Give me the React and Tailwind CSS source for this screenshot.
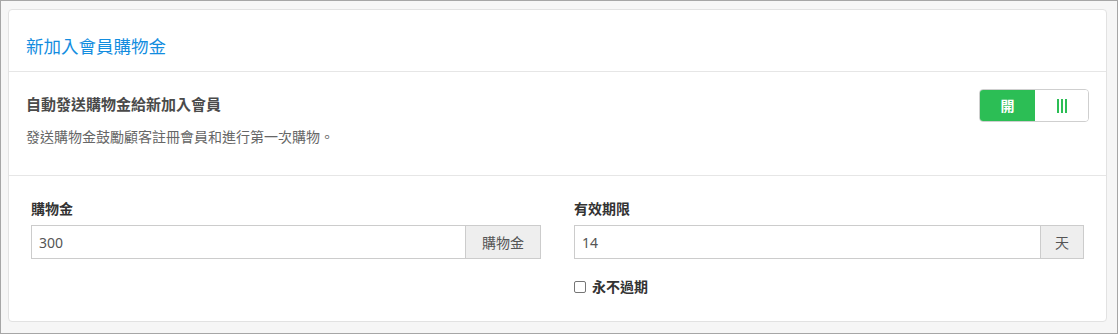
import React from "react";

export default function App() {
  const font = { fontFamily: '"Noto Sans", "Noto Sans CJK TC", sans-serif' };
  return (
    <div
      className="w-[1118px] h-[334px] border border-[#a6a6a6] bg-[#f6f6f6] pl-[7px] pr-[10px] pt-[8px] pb-[11px] box-border"
      style={font}
    >
      <div className="h-full bg-white border border-[#e2e2e2] rounded-[4px] flex flex-col">
        <div className="h-[62px] px-[17px] pt-[24px] border-b border-[#e6e6e6]">
          <h2 className="text-[17.5px] leading-[24px] text-[#138ddf] font-normal">新加入會員購物金</h2>
        </div>
        <div className="h-[104px] px-[17px] pt-[19px] border-b border-[#e6e6e6] flex justify-between">
          <div>
            <div className="text-[15px] leading-[26px] font-bold text-[#4a4a4a]">自動發送購物金給新加入會員</div>
            <div className="mt-[9px] text-[14px] leading-[22px] text-[#666]">發送購物金鼓勵顧客註冊會員和進行第一次購物。</div>
          </div>
          <div className="-mt-[2px] w-[110px] h-[33px] border border-[#cfcfcf] rounded-[4px] flex overflow-hidden">
            <div className="w-[55px] bg-[#2cbe55] flex items-center justify-center text-white text-[14px] font-bold">開</div>
            <div className="flex-1 bg-white flex items-center justify-center gap-[2px]">
              <span className="block w-[2px] h-[14px] bg-[#2cbe55]"></span>
              <span className="block w-[2px] h-[14px] bg-[#2cbe55]"></span>
              <span className="block w-[2px] h-[14px] bg-[#2cbe55]"></span>
            </div>
          </div>
        </div>
        <div className="flex-1 px-[22px] pt-[22px] grid grid-cols-2 gap-x-[33px] content-start">
          <div>
            <div className="text-[14px] leading-[22px] font-bold text-[#333]">購物金</div>
            <div className="mt-[5px] flex h-[34px] border border-[#cccccc]">
              <div className="flex-1 flex items-center px-[7px] text-[14px] text-[#555]">300</div>
              <div className="w-[75px] bg-[#eeeeee] border-l border-[#cccccc] flex items-center justify-center text-[14px] text-[#555]">購物金</div>
            </div>
          </div>
          <div>
            <div className="text-[14px] leading-[22px] font-bold text-[#333]">有效期限</div>
            <div className="mt-[5px] flex h-[34px] border border-[#cccccc]">
              <div className="flex-1 flex items-center px-[7px] text-[14px] text-[#555]">14</div>
              <div className="w-[43px] bg-[#eeeeee] border-l border-[#cccccc] flex items-center justify-center text-[14px] text-[#555]">天</div>
            </div>
            <label className="mt-[18px] flex items-center gap-[6px]">
              <span className="block w-[12px] h-[12px] border border-[#767676] rounded-[2px] bg-white"></span>
              <span className="text-[14px] leading-[20px] font-bold text-[#333]">永不過期</span>
            </label>
          </div>
        </div>
      </div>
    </div>
  );
}
